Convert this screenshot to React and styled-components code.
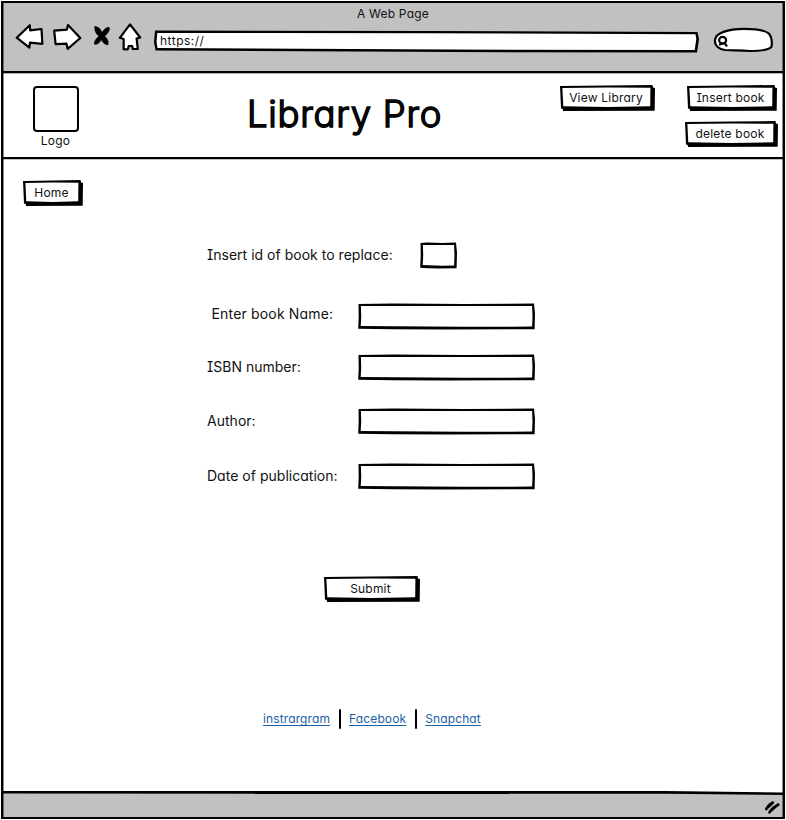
import React from "react";
import styled, { createGlobalStyle, css } from "styled-components";

const INK = "#000";
const CHROME = "#c1c1c1";

const GlobalStyle = createGlobalStyle`
  *, *::before, *::after { box-sizing: border-box; }
  body {
    margin: 0;
    background: #fff;
    color: #111;
    font-family: Inter, "Noto Sans", sans-serif;
    font-size: 12px;
    letter-spacing: 0.2px;
    font-feature-settings: "cv11", "cv08";
  }
`;

/* A hand-drawn panel: an ink polygon with a lighter one on top of it. */
const sketch = (outer, inner, fill = "#fff") => css`
  position: relative;
  isolation: isolate;
  &::before, &::after {
    content: "";
    position: absolute;
    inset: 0;
    z-index: -1;
  }
  &::before { background: ${INK}; clip-path: polygon(${outer}); }
  &::after { background: ${fill}; clip-path: polygon(${inner}); }
`;

const Page = styled.div`
  width: 786px;
  height: 820px;
  padding: 1px;
`;

/* The overlay softens the inner side of the left and right strokes. */
const Browser = styled.div`
  position: relative;
  display: flex;
  flex-direction: column;
  height: 818px;
  border: 2px solid ${INK};
  &::after {
    content: "";
    position: absolute;
    inset: 0;
    border: solid rgba(0, 0, 0, 0.45);
    border-width: 0 1px;
    pointer-events: none;
  }
`;

const Chrome = styled.div`
  height: 70px;
  flex: none;
  background: ${CHROME};
  border-bottom: 2px solid ${INK};
  box-shadow: 0 1px 0 rgba(0, 0, 0, 0.3);
`;

const PageTitle = styled.div`
  height: 21px;
  line-height: 21px;
  text-align: center;
`;

const NavRow = styled.div`
  display: flex;
  align-items: flex-start;
  padding-left: 12px;
`;

const NavIcon = styled.svg`
  flex: none;
  margin-top: -1px;
  margin-right: ${(p) => p.$gap}px;
  fill: #fff;
  stroke: ${INK};
  stroke-width: 2.2;
  stroke-linejoin: round;
  stroke-linecap: round;
`;

const UrlBar = styled.div`
  width: 545px;
  height: 23px;
  margin: 6px 14px 0 0;
  padding-left: 6px;
  line-height: 22px;
  letter-spacing: 0.5px;
  ${sketch(
    "1px 0.5px, 50% 1px, 543.5px 2px, 545px 9px, 543px 22.6px, 300px 22px, 1.5px 20.5px, 0 12px",
    "3.3px 2.9px, 50% 3.3px, 541.5px 4.2px, 542.3px 9px, 540.7px 19.9px, 300px 19.6px, 3.5px 18px, 2.5px 12px"
  )}
`;

const Header = styled.header`
  display: flex;
  align-items: flex-start;
  flex: none;
  height: 86px;
  border-bottom: 2px solid ${INK};
  box-shadow: 0 0.5px 0 rgba(0, 0, 0, 0.5);
`;

const LogoBlock = styled.div`
  display: flex;
  flex-direction: column;
  align-items: center;
  width: 46px;
  margin: 13px 0 0 29.5px;
`;

const LogoBox = styled.div`
  width: 46px;
  height: 46px;
  border: 2px solid ${INK};
  border-radius: 4px;
  margin-bottom: 1px;
`;

const SiteTitle = styled.h1`
  margin: 17.5px 0 0 168.5px;
  width: 200px;
  font-size: 36.5px;
  line-height: 46px;
  font-weight: 300;
  letter-spacing: 0.75px;
  white-space: nowrap;
  -webkit-text-stroke: 1.5px ${INK};
  stroke-linejoin: round;
`;

const Actions = styled.nav`
  display: flex;
  align-items: flex-start;
  flex: 1;
  justify-content: space-between;
  padding: 12px 5px 0 113px;
`;

const ActionStack = styled.div`
  display: flex;
  flex-direction: column;
  align-items: flex-end;
  gap: 10px;
`;

const Button = styled.button`
  width: ${(p) => p.$width}px;
  height: 26px;
  margin-right: ${(p) => p.$inset || 0}px;
  padding: 0 3px 1px 0;
  border: 0;
  background: none;
  color: inherit;
  font: inherit;
  letter-spacing: inherit;
  font-feature-settings: inherit;
  ${sketch(
    "0 1px, 50% 0.5px, calc(100% - 2.5px) 0, calc(100% - 2px) 2.5px, 100% 3px, calc(100% - 0.3px) 25.7px, 3px 26px, 2.8px 24px, 1px 23.5px",
    "2.4px 2.9px, 50% 2.6px, calc(100% - 4.6px) 2.7px, calc(100% - 4.8px) 21.3px, 50% 22px, 3.3px 21.2px"
  )}
`;

const Content = styled.main`
  display: flex;
  flex-direction: column;
  align-items: flex-start;
  flex: 1;
  padding: 21px 0 0 20px;
`;

const Form = styled.form`
  display: flex;
  flex-direction: column;
  margin: 36px 0 0 184px;
`;

const FieldRow = styled.div`
  display: flex;
  align-items: center;
  height: 27px;
  margin-bottom: ${(p) => p.$gap}px;
`;

const Label = styled.label`
  width: ${(p) => p.$width}px;
  padding: ${(p) => (p.$raised ? "0 0 6px 4.5px" : "0 0 2px")};
  font-size: 14px;
  letter-spacing: ${(p) => (p.$raised ? "0.17px" : "0.02px")};
  white-space: nowrap;
`;

const Field = styled.div`
  width: ${(p) => p.$width}px;
  height: 27px;
  ${sketch(
    "0.5px 1px, 20% 0.5px, 60% 0.9px, calc(100% - 1px) 0.6px, 100% 40%, calc(100% - 0.4px) 26.2px, 50% 26.4px, 20% 26.2px, 0.2px 25.8px, 0.7px 50%",
    "2.9px 3.1px, 30% 2.9px, 60% 3.1px, calc(100% - 2.9px) 3px, calc(100% - 2.5px) 50%, calc(100% - 2.9px) 23.6px, 60% 23.8px, 2.7px 23.1px, 3.2px 50%"
  )}
`;

const SubmitArea = styled.div`
  margin: 86px 0 0 301px;
`;

const Links = styled.nav`
  display: flex;
  align-items: center;
  height: 20px;
  margin: 106px 0 0 240px;
`;

const Link = styled.a`
  color: #1a5fa6;
  letter-spacing: 0.12px;
  text-decoration: underline;
  text-decoration-thickness: 1px;
  text-underline-offset: 2px;
  text-decoration-skip-ink: none;
`;

const Divider = styled.span`
  width: 2px;
  height: 20px;
  margin: 2px 8px 0 9px;
  background: ${INK};
  border-radius: 1px;
`;

const StatusBar = styled.footer`
  display: flex;
  justify-content: flex-end;
  flex: none;
  height: 26px;
  padding: 9px 3px 0 0;
  ${sketch(
    "0 0, 85% 0, 100% 1.5px, 100% 100%, 0 100%",
    "0 2.6px, 85% 2.8px, 100% 4px, 100% 100%, 0 100%",
    CHROME
  )}
`;

const fields = [
  { label: "Insert id of book to replace:", labelWidth: 213, width: 37, gap: 34 },
  { label: "Enter book Name:", labelWidth: 151, width: 177, gap: 24, raised: true },
  { label: "ISBN number:", labelWidth: 151, width: 177, gap: 27 },
  { label: "Author:", labelWidth: 151, width: 177, gap: 28 },
  { label: "Date of publication:", labelWidth: 151, width: 177, gap: 0 },
];

const BackIcon = () => (
  <NavIcon $gap={9} width="29" height="28" viewBox="15 23 29 28">
    <path d="M16.7 37.7 29.8 25.2 30.2 30.3 41.5 29 42.4 43.8 30 42.6 29.4 47.6Z" />
  </NavIcon>
);

const ForwardIcon = () => (
  <NavIcon $gap={10} width="29" height="28" viewBox="53 23 29 28">
    <path d="M54.2 30.6 66.8 29.7 68 25.1 80.3 38 67.7 48.9 66.5 43.7 55.6 44.2Z" />
  </NavIcon>
);

const StopIcon = () => (
  <NavIcon $gap={7} width="19" height="28" viewBox="92 23 19 28">
    <path
      fill={INK}
      strokeWidth="0.8"
      d="M95 26.8C98.500 26.300 100.800 29.500 102 32.800 103.500 30 106 27 109.200 27.600 110 31 107 34 104.600 36.200 107 38.500 109 41.500 107.800 44.700 104.500 44.500 102.300 42 101.300 39.500 99.800 42 97.800 44.800 94.600 44.200 94 41 96.500 38.500 98.900 36.200 96.200 33.800 94.200 30.300 95 26.800Z"
    />
  </NavIcon>
);

const HomeIcon = () => (
  <NavIcon $gap={12} width="24" height="28" viewBox="118 23 24 28">
    <path d="M130 24.3 140.2 37.5 136.6 38.6 137.8 48.8 132.8 49 132.2 46 128.8 46 127.8 49.3 123.6 49.2 123.7 39 119.8 37.8Z" />
  </NavIcon>
);

const SearchBox = () => (
  <NavIcon $gap={0} width="62" height="30" viewBox="713 24 62 30">
    <path d="M714.9 41.5C715 34 728 29.9 744 29.9 757 29.9 766 31.5 769.3 35 772 38.5 772.2 44 771.4 48 768 51.2 757 52 750 52 740 51.8 733 51.2 725 51 719 50.2 714.9 46.5 714.9 41.5Z" />
    <ellipse cx="722.6" cy="41.2" rx="3.5" ry="3.3" />
    <path d="M719.8 45.5 722.3 44.6M724.3 44 726.6 46.7" />
  </NavIcon>
);

const ResizeGrip = () => (
  <svg width="16" height="14" viewBox="764 800 16 14">
    <path
      d="M766.2 809.2C768 806 770.5 803.5 772.8 802.5M769.5 812.3C772 808.5 775.5 806 778.3 804.8M766.5 808.6 772.5 803M770 811.5 778 804.5"
      fill="none"
      stroke={INK}
      strokeWidth="2.6"
      strokeLinecap="round"
    />
  </svg>
);

export default function App() {
  return (
    <>
      <GlobalStyle />
      <Page>
        <Browser>
          <Chrome>
            <PageTitle>A Web Page</PageTitle>
            <NavRow>
              <BackIcon />
              <ForwardIcon />
              <StopIcon />
              <HomeIcon />
              <UrlBar>https://</UrlBar>
              <SearchBox />
            </NavRow>
          </Chrome>
          <Header>
            <LogoBlock>
              <LogoBox />
              Logo
            </LogoBlock>
            <SiteTitle>Library Pro</SiteTitle>
            <Actions>
              <Button $width={95}>View Library</Button>
              <ActionStack>
                <Button $width={90} $inset={1}>Insert book</Button>
                <Button $width={93}>delete book</Button>
              </ActionStack>
            </Actions>
          </Header>
          <Content>
            <Button $width={60}>Home</Button>
            <Form>
              {fields.map((f) => (
                <FieldRow key={f.label} $gap={f.gap}>
                  <Label $width={f.labelWidth} $raised={f.raised}>{f.label}</Label>
                  <Field $width={f.width} />
                </FieldRow>
              ))}
            </Form>
            <SubmitArea>
              <Button $width={96}>Submit</Button>
            </SubmitArea>
            <Links>
              <Link>instrargram</Link>
              <Divider />
              <Link>Facebook</Link>
              <Divider />
              <Link>Snapchat</Link>
            </Links>
          </Content>
          <StatusBar>
            <ResizeGrip />
          </StatusBar>
        </Browser>
      </Page>
    </>
  );
}
